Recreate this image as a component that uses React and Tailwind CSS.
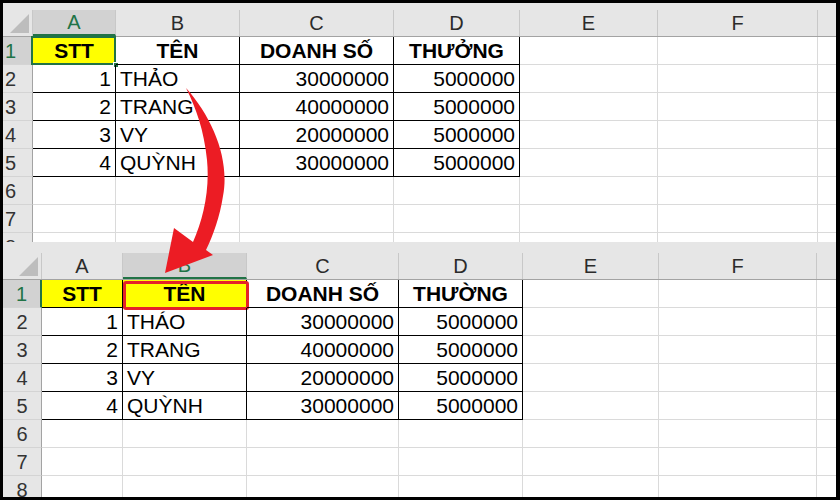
import React from 'react';
import clsx from 'clsx';

// G is the partly visible column at the right edge: its letter is out of view
const LETTERS = ['A', 'B', 'C', 'D', 'E', 'F', ''];

const TOP_ROWS = [
  ['STT', 'TÊN', 'DOANH SỐ', 'THƯỞNG'],
  ['1', 'THẢO', '30000000', '5000000'],
  ['2', 'TRANG', '40000000', '5000000'],
  ['3', 'VY', '20000000', '5000000'],
  ['4', 'QUỲNH', '30000000', '5000000'],
];

const BOTTOM_ROWS = [
  ['STT', 'TÊN', 'DOANH SỐ', 'THƯỜNG'],
  ['1', 'THÁO', '30000000', '5000000'],
  ['2', 'TRANG', '40000000', '5000000'],
  ['3', 'VY', '20000000', '5000000'],
  ['4', 'QUỲNH', '30000000', '5000000'],
];

const Corner = () => (
  <svg className="absolute right-[3px] bottom-[3px] w-[19px] h-[19px]" viewBox="0 0 19 19">
    <polygon points="19,0 19,19 0,19" fill="#bdbdbd" />
  </svg>
);

const Sheet = ({ heightClass, stripClass, rowNumClass, numAlign, widths, selCol, yellow, data, marker }) => (
  <div className={clsx('flex flex-col overflow-hidden bg-white shrink-0', heightClass)}>
    <div className={clsx('shrink-0 bg-[#e6e6e6]', stripClass)} />
    <div className="flex h-[27px] shrink-0 bg-[#e6e6e6] border-b border-[#a3a3a3]">
      <div className={clsx('relative shrink-0 border-r border-[#c8c8c8]', rowNumClass)}>
        <Corner />
      </div>
      {widths.map((w, i) => (
        <div
          key={i}
          className={clsx(
            'shrink-0 flex items-center justify-center text-[20px] leading-none border-r border-[#c8c8c8]',
            w,
            i === selCol ? 'bg-[#d2d2d2] text-[#217346] border-b-2 border-b-[#217346]' : 'text-[#2b2b2b]'
          )}
        >
          {LETTERS[i]}
        </div>
      ))}
    </div>
    {Array.from({ length: 8 }).map((_, r) => (
      <div key={r} className="flex h-[28px] shrink-0">
        <div
          className={clsx(
            'shrink-0 flex items-center text-[20px] border-b border-b-[#d4d4d4] border-r',
            rowNumClass,
            numAlign,
            r === 0 ? 'bg-[#d2d2d2] text-[#217346] border-r-2 border-r-[#217346]' : 'bg-[#e6e6e6] text-[#333] border-r-[#a3a3a3]'
          )}
        >
          {r + 1}
        </div>
        {widths.map((w, c) => {
          const inTable = r < 5 && c < 4;
          const value = inTable ? data[r][c] : '';
          const head = r === 0;
          const align = head ? 'justify-center' : c === 1 ? 'justify-start' : 'justify-end';
          return (
            <div
              key={c}
              className={clsx(
                'relative shrink-0 flex items-center px-[4px] text-[21px] leading-[28px] text-black whitespace-nowrap border-r border-b',
                w,
                align,
                head && 'font-bold',
                inTable ? 'border-black' : 'border-[#dadada]',
                r === 0 && yellow.includes(c) && 'bg-[#ffff00]'
              )}
            >
              {value}
              {r === 0 && c === marker.col && marker.el}
            </div>
          );
        })}
      </div>
    ))}
  </div>
);

const GreenSelect = (
  <>
    <div className="absolute -left-[2px] -top-[1px] -right-[1px] -bottom-[1px] border-2 border-[#217346]" />
    <div className="absolute -right-[4px] -bottom-[4px] w-[6px] h-[6px] bg-[#217346] border border-white" />
  </>
);

const RedBox = (
  <div className="absolute left-0 top-[1px] -right-[3px] -bottom-[3px] border-[3px] border-[#e4222a] rounded-[3px]" />
);

const Arrow = () => (
  <svg className="absolute inset-0 pointer-events-none" width="840" height="500" viewBox="0 0 840 500">
    <path
      d="M186 88 C213 118 230 160 223 196 C220 216 213 236 206 250 L213 255 L165 273 L174 228 L193 242 C203 220 210 190 207 160 C204 130 196 108 186 88 Z"
      fill="#ec1c24"
    />
  </svg>
);

export default function App() {
  return (
    <div className="relative w-[840px] h-[500px] bg-black pt-[3px] pl-[3px] pr-[4px] pb-[3px] overflow-hidden font-['Liberation_Sans',Arial,sans-serif]">
      <div className="flex flex-col h-full overflow-hidden">
        <Sheet
          heightClass="h-[239px]"
          stripClass="h-[7px]"
          rowNumClass="w-[30px]"
          numAlign="justify-start pl-[2px]"
          widths={['w-[83px]', 'w-[124px]', 'w-[154px]', 'w-[126px]', 'w-[138px]', 'w-[160px]', 'w-[40px]']}
          selCol={0}
          yellow={[0]}
          data={TOP_ROWS}
          marker={{ col: 0, el: GreenSelect }}
        />
        <Sheet
          heightClass="h-[255px]"
          stripClass="h-[11px]"
          rowNumClass="w-[39px]"
          numAlign="justify-center"
          widths={['w-[81px]', 'w-[124px]', 'w-[152px]', 'w-[124px]', 'w-[136px]', 'w-[158px]', 'w-[40px]']}
          selCol={1}
          yellow={[0, 1]}
          data={BOTTOM_ROWS}
          marker={{ col: 1, el: RedBox }}
        />
      </div>
      <Arrow />
    </div>
  );
}
